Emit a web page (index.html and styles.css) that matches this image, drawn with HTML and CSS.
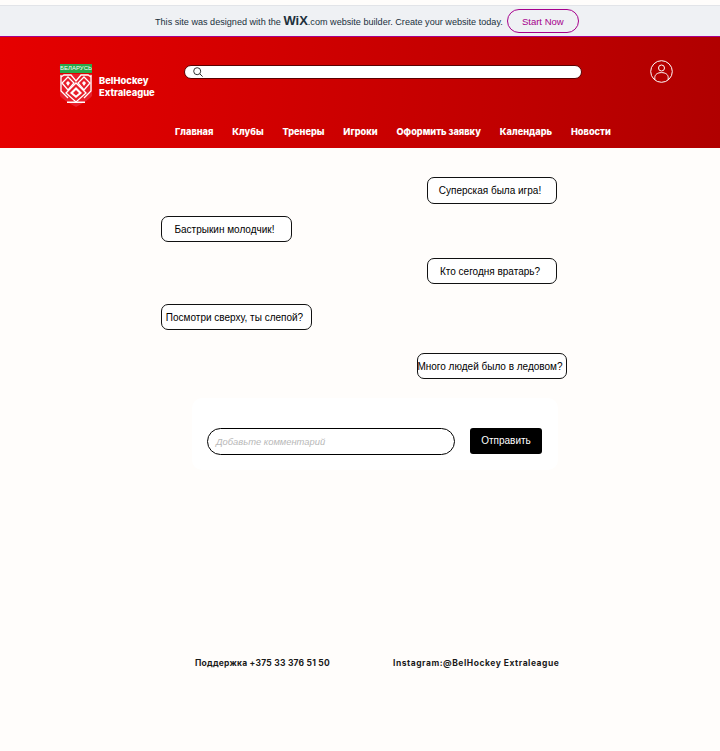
FILE: index.html
```html
<!DOCTYPE html>
<html lang="ru">
  <head>
    <meta charset="UTF-8" />
    <title>BelHockey Extraleague</title>
    <link rel="stylesheet" href="styles.css">
  </head>
  <body>
    <div class="wix-bar">
      <span class="wix-text">This site was designed with the <b class="wix-logo">WiX</b>.com website builder. Create your website today.</span>
      <span class="wix-btn">Start Now</span>
    </div>
    <header class="header">
      <div class="header-top">
        <div class="logo">
          <div class="logo-label">БЕЛАРУСЬ</div>
          <svg class="logo-shield" width="32" height="33" viewBox="0 0 32 33">
            <path d="M0 0H32V22Q29 26 16 33Q3 26 0 22Z" fill="#e8202c" />
            <g fill="none" stroke="#fff" stroke-width="1.3">
              <path d="M1 1V17L8 24M31 1V17L24 24" />
              <path d="M1 3L4 1H11L16 7L21 1H28L31 3" />
              <path d="M8 3L14 9L8 16L2 9Z" />
              <path d="M24 3L30 9L24 16L18 9Z" />
              <path d="M16 9L26 19L16 28L6 19Z" />
            </g>
            <path d="M8 7L10 9L8 12L6 9Z M24 7L26 9L24 12L22 9Z" fill="#fff" />
            <path d="M16 13L22 19L16 24L10 19Z" fill="#fff" />
            <path d="M16 16L19 19L16 21.5L13 19Z" fill="#e8202c" />
            <path d="M7 27.5H25V29H7Z" fill="#fff" />
          </svg>
        </div>
        <div class="brand">BelHockey<br>Extraleague</div>
        <div class="search">
          <svg width="10" height="10" viewBox="0 0 10 10" fill="none" stroke="#333" stroke-width="1">
            <circle cx="4.2" cy="4.2" r="3.5" />
            <path d="M6.8 6.8L9.6 9.6" />
          </svg>
        </div>
        <svg class="user" width="23" height="23" viewBox="0 0 23 23" fill="none" stroke="#fff" stroke-width="1">
          <circle cx="11.5" cy="11.5" r="10.8" />
          <circle cx="11.5" cy="8" r="3" />
          <path d="M4.8 20V17.5C4.8 14.5 7.5 12.6 11.5 12.6C15.5 12.6 18.2 14.5 18.2 17.5V20" />
        </svg>
      </div>
      <nav class="nav">
        <a>Главная</a>
        <a>Клубы</a>
        <a>Тренеры</a>
        <a>Игроки</a>
        <a>Оформить заявку</a>
        <a>Календарь</a>
        <a>Новости</a>
      </nav>
    </header>
    <main class="main">
      <div class="comments">
        <div class="bubble right first">Суперская была игра!</div>
        <div class="bubble left second">Бастрыкин молодчик!</div>
        <div class="bubble right third">Кто сегодня вратарь?</div>
        <div class="bubble left fourth">Посмотри сверху, ты слепой?</div>
        <div class="bubble last fifth">Много людей было в ледовом?</div>
      </div>
      <form class="comment-form">
        <div class="comment-input">Добавьте комментарий</div>
        <div class="comment-send">Отправить</div>
      </form>
    </main>
    <footer class="footer">
      <span class="support">Поддержка +375 33 376 51 50</span>
      <span class="insta">Instagram:@BelHockey Extraleague</span>
    </footer>
  </body>
</html>
```

FILE: styles.css
```css
* {
  padding: 0;
  margin: 0;
  box-sizing: border-box;
}
body {
  width: 720px;
  height: 751px;
  overflow: hidden;
  background-color: #fffdfb;
  font-family: "Liberation Sans", Arial, sans-serif;
  color: #000;
}

/* wix banner */
.wix-bar {
  height: 32px;
  margin-top: 5px;
  background-color: #eff1f4;
  border-top: 1px solid #e2e4e8;
  border-bottom: 1px solid #a6008c;
  display: flex;
  align-items: center;
  padding-left: 155px;
  gap: 4px;
  font-size: 9.1px;
  color: #20303c;
}
.wix-logo {
  font-size: 13px;
  font-weight: bold;
  line-height: 10px;
}
.wix-btn {
  width: 72px;
  height: 24px;
  border: 1px solid #a6008c;
  border-radius: 12px;
  color: #a6008c;
  font-size: 9.5px;
  display: flex;
  align-items: center;
  justify-content: center;
}

/* header */
.header {
  height: 111px;
  background: linear-gradient(95deg, #e60000 0%, #b00000 100%);
  color: #fff;
}
.header-top {
  height: 74px;
  display: flex;
  align-items: flex-start;
  padding-left: 60px;
}
.logo {
  width: 32px;
  margin-top: 27px;
}
.logo-label {
  height: 9px;
  margin-bottom: 1px;
  background-color: #2aa84a;
  color: #fff;
  font-size: 6px;
  line-height: 9px;
  text-align: center;
  white-space: nowrap;
}
.logo-shield {
  display: block;
}
.brand {
  margin-top: 38px;
  margin-left: 7px;
  width: 85px;
  font-family: Inter, sans-serif;
  font-size: 9.4px;
  font-weight: 800;
  line-height: 12px;
  white-space: nowrap;
}
.search {
  width: 398px;
  height: 14px;
  margin-top: 28px;
  background-color: #fff;
  border: 1px solid #5a0000;
  border-radius: 7px;
  padding-left: 8px;
  display: flex;
  align-items: center;
}
.user {
  margin-top: 23px;
  margin-left: 68px;
}
.nav {
  display: flex;
  padding-left: 175px;
  gap: 18.9px;
  font-family: Inter, sans-serif;
  font-size: 9.2px;
  font-weight: 800;
  line-height: 12px;
  margin-top: 15px;
}

/* comments */
.main {
  padding-top: 29px;
}
.comments {
  width: 406px;
  margin-left: 161px;
  display: flex;
  flex-direction: column;
  font-size: 10px;
}
.bubble {
  height: 26px;
  width: 130px;
  padding-right: 4px;
  background-color: #fff;
  border: 1px solid #111;
  border-radius: 7px;
  display: flex;
  align-items: center;
  justify-content: center;
  white-space: nowrap;
}
.bubble.right {
  align-self: flex-end;
  margin-right: 10px;
}
.bubble.left {
  align-self: flex-start;
}
.bubble.last {
  align-self: flex-end;
  width: 150px;
}
.first {
  height: 27px;
}
.second {
  margin-top: 12px;
  width: 131px;
}
.third {
  margin-top: 16px;
}
.fourth {
  margin-top: 20px;
  width: 151px;
}
.fifth {
  margin-top: 23px;
}
.comment-form {
  width: 366px;
  height: 72px;
  margin-top: 19px;
  margin-left: 192px;
  padding: 30px 16px 0 15px;
  background-color: #fff;
  border-radius: 10px;
  display: flex;
  align-items: flex-start;
  gap: 15px;
}
.comment-input {
  width: 248px;
  height: 27px;
  border: 1px solid #000;
  border-radius: 14px;
  padding-left: 8px;
  font-size: 9.4px;
  font-style: italic;
  line-height: 25px;
  color: #b8b8b8;
}
.comment-send {
  width: 72px;
  height: 26px;
  background-color: #000;
  border-radius: 3px;
  color: #fff;
  font-size: 10px;
  line-height: 26px;
  text-align: center;
}

/* footer */
.footer {
  margin-top: 187px;
  padding-left: 195px;
  display: flex;
  gap: 63px;
  font-family: Inter, sans-serif;
  font-size: 8.5px;
  font-weight: 700;
  line-height: 12px;
  color: #1a1a1a;
}
.support {
  letter-spacing: 0.22px;
}
.insta {
  letter-spacing: 0.53px;
}
```
